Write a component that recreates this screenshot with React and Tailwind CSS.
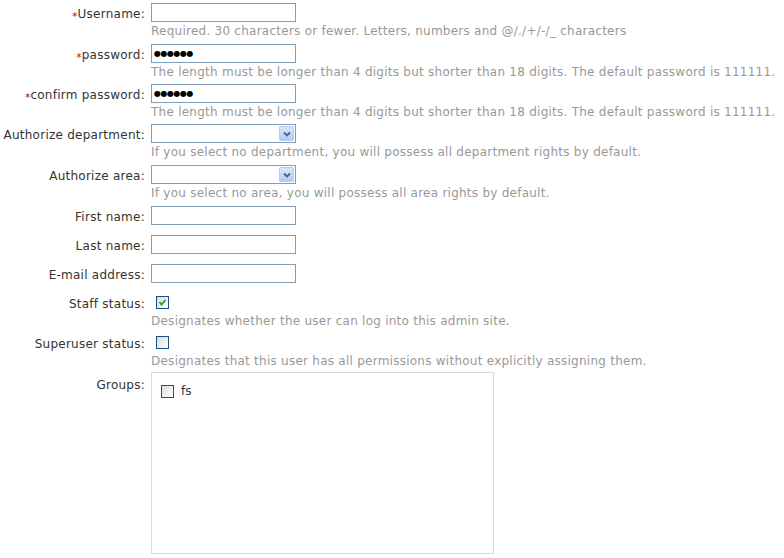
import React from "react";

const font = { fontFamily: '"DejaVu Sans", Verdana, sans-serif' };

function Label({ children, required, className = "pt-[2px]" }) {
  return (
    <div className={`h-[19px] w-[145px] shrink-0 text-right text-[12px] leading-[19px] tracking-[0.25px] text-[#333] ${className}`}>
      {required && <span className="inline-block translate-y-[2px] text-[10px] leading-[10px] text-[#a00]">*</span>}
      {children}
    </div>
  );
}

function Help({ children }) {
  return (
    <div className="mt-[2px] text-[12px] leading-[15px] tracking-[0.25px] text-[#999] whitespace-nowrap">{children}</div>
  );
}

function TextInput({ value = "" }) {
  return (
    <div className="flex h-[19px] w-[145px] items-center border border-[#7f9db9] bg-white pl-[2px] text-[8px] tracking-[-0.5px] text-black">
      {value}
    </div>
  );
}

function Select() {
  return (
    <div className="flex h-[19px] w-[145px] items-stretch justify-end border border-[#7f9db9] bg-white p-[1px]">
      <div className="flex w-[15px] items-center justify-center rounded-[1px] border border-[#b8cbf5] bg-gradient-to-b from-[#dbe5fd] to-[#b5c9f7]">
        <svg width="8" height="6" viewBox="0 0 8 6">
          <path d="M1 1.5 L4 4.5 L7 1.5" fill="none" stroke="#4d6185" strokeWidth="1.8" />
        </svg>
      </div>
    </div>
  );
}

function Checkbox({ checked }) {
  return (
    <div className="flex h-[13px] w-[13px] items-center justify-center border border-[#1c5180] bg-gradient-to-br from-[#dcdcd7] to-white">
      {checked && (
        <svg width="9" height="9" viewBox="0 0 9 9">
          <path d="M1.5 4 L3.5 6.5 L7.5 2" fill="none" stroke="#21a121" strokeWidth="1.8" />
        </svg>
      )}
    </div>
  );
}

function Row({ label, required, labelClass, children, className = "" }) {
  return (
    <div className={`flex ${className}`}>
      <Label required={required} className={labelClass}>{label}</Label>
      <div className="ml-[6px] flex flex-col">{children}</div>
    </div>
  );
}

export default function App() {
  return (
    <div className="h-[558px] w-[784px] overflow-hidden bg-white pt-[3px]" style={font}>
      <Row label="Username:" required>
        <TextInput />
        <Help>Required. 30 characters or fewer. Letters, numbers and @/./+/-/_ characters</Help>
      </Row>
      <Row label="password:" required className="mt-[5px]">
        <TextInput value="●●●●●●" />
        <Help>The length must be longer than 4 digits but shorter than 18 digits. The default password is 111111.</Help>
      </Row>
      <Row label="confirm password:" required className="mt-[4px]">
        <TextInput value="●●●●●●" />
        <Help>The length must be longer than 4 digits but shorter than 18 digits. The default password is 111111.</Help>
      </Row>
      <Row label="Authorize department:" className="mt-[4px]">
        <Select />
        <Help>If you select no department, you will possess all department rights by default.</Help>
      </Row>
      <Row label="Authorize area:" className="mt-[5px]">
        <Select />
        <Help>If you select no area, you will possess all area rights by default.</Help>
      </Row>
      <Row label="First name:" className="mt-[5px]">
        <TextInput />
      </Row>
      <Row label="Last name:" className="mt-[10px]">
        <TextInput />
      </Row>
      <Row label="E-mail address:" className="mt-[10px]">
        <TextInput />
      </Row>
      <Row label="Staff status:" className="mt-[10px]">
        <div className="flex h-[19px] items-center pl-[5px]">
          <Checkbox checked />
        </div>
        <Help>Designates whether the user can log into this admin site.</Help>
      </Row>
      <Row label="Superuser status:" className="mt-[4px]">
        <div className="flex h-[19px] items-center pl-[5px]">
          <Checkbox />
        </div>
        <Help>Designates that this user has all permissions without explicitly assigning them.</Help>
      </Row>
      <Row label="Groups:" labelClass="pt-[4px]" className="mt-[3px]">
        <div className="h-[182px] w-[343px] border border-[#cfdde8] bg-white px-[9px] pt-[11px]">
          <div className="flex items-center gap-[7px]">
            <Checkbox />
            <span className="text-[12px] leading-[15px] text-[#333]">fs</span>
          </div>
        </div>
      </Row>
    </div>
  );
}
